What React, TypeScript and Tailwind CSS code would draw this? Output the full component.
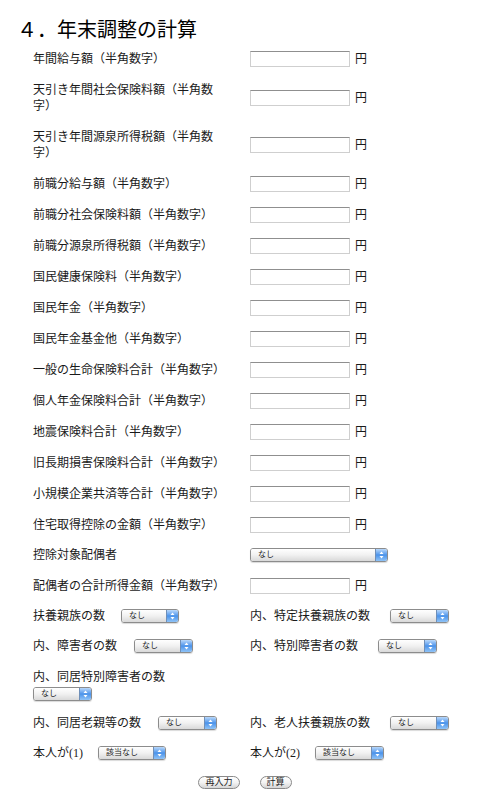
import type { ReactNode } from 'react'

const FONT = { fontFamily: '"Liberation Serif", "Noto Sans CJK JP", serif' }

const amountRows: ReactNode[] = [
  '年間給与額（半角数字）',
  <>天引き年間社会保険料額（半角数<br />字）</>,
  <>天引き年間源泉所得税額（半角数<br />字）</>,
  '前職分給与額（半角数字）',
  '前職分社会保険料額（半角数字）',
  '前職分源泉所得税額（半角数字）',
  '国民健康保険料（半角数字）',
  '国民年金（半角数字）',
  '国民年金基金他（半角数字）',
  '一般の生命保険料合計（半角数字）',
  '個人年金保険料合計（半角数字）',
  '地震保険料合計（半角数字）',
  '旧長期損害保険料合計（半角数字）',
  '小規模企業共済等合計（半角数字）',
  '住宅取得控除の金額（半角数字）',
]

function Arrows() {
  return (
    <svg width="5" height="8" viewBox="0 0 5 8">
      <path d="M2.5 0.5 L4.5 3 L0.5 3 Z" fill="#fff" />
      <path d="M2.5 7.5 L4.5 5 L0.5 5 Z" fill="#fff" />
    </svg>
  )
}

function Select({ className, text = 'なし' }: { className: string; text?: string }) {
  return (
    <span
      className={`inline-flex h-[14px] items-stretch overflow-hidden rounded-[3px] border border-[#8c8c8c] align-middle shadow-[0_1px_1px_rgba(0,0,0,0.15)] ${className}`}
    >
      <span className="flex flex-1 items-center bg-linear-to-b from-white via-[#f1f1f1] to-[#d9d9d9] pl-[7px] text-[8px] leading-none text-[#222]">
        {text}
      </span>
      <span className="flex w-[12px] items-center justify-center border-l border-[#6f8fb8] bg-linear-to-b from-[#b9d8fa] via-[#4b93ea] to-[#8fc3f7]">
        <Arrows />
      </span>
    </span>
  )
}

function Amount() {
  return (
    <div className="flex items-center">
      <span className="h-[16px] w-[100px] border border-[#cfcfcf] border-t-[#8f8f8f] bg-white" />
      <span className="ml-[5px]">円</span>
    </div>
  )
}

function Row({ label, children, tight }: { label: ReactNode; children?: ReactNode; tight?: boolean }) {
  const pad = tight ? 'py-[7px]' : 'py-[7.5px]'
  return (
    <>
      <div className={`${pad} pr-[17px]`}>{label}</div>
      <div className={`${pad} flex items-center`}>{children}</div>
    </>
  )
}

function Pair({ children }: { children: ReactNode }) {
  return <div className="flex h-[30px] items-center">{children}</div>
}

function Btn({ children }: { children: ReactNode }) {
  return (
    <span className="inline-flex h-[13px] items-center rounded-full border border-[#8a8a8a] bg-linear-to-b from-white via-[#f3f3f3] to-[#d6d6d6] px-[6px] text-[9px] leading-none text-[#222]">
      {children}
    </span>
  )
}

export default function App() {
  return (
    <div className="min-h-[809px] w-[480px] bg-white text-[#1a1a1a]" style={FONT}>
      <h1 className="pl-[17px] pt-[18px] text-[20px] leading-[24px] font-normal text-black">４．年末調整の計算</h1>

      <div className="mt-[1px] grid grid-cols-[217px_1fr] items-center pl-[33px] text-[12px] leading-[16px]">
        {amountRows.map((label, i) => (
          <Row key={i} label={label}>
            <Amount />
          </Row>
        ))}

        <Row label="控除対象配偶者" tight>
          <Select className="w-[138px]" />
        </Row>

        <Row label="配偶者の合計所得金額（半角数字）">
          <Amount />
        </Row>

        <Pair>
          扶養親族の数
          <Select className="ml-[16px] w-[58px]" />
        </Pair>
        <Pair>
          内、特定扶養親族の数
          <Select className="ml-[20px] w-[59px]" />
        </Pair>

        <Pair>
          内、障害者の数
          <Select className="ml-[17px] w-[59px]" />
        </Pair>
        <Pair>
          内、特別障害者の数
          <Select className="ml-[20px] w-[59px]" />
        </Pair>

        <div className="pb-[7px] pt-[7.5px]">
          <div>内、同居特別障害者の数</div>
          <Select className="w-[59px]" />
        </div>
        <div />

        <Pair>
          内、同居老親等の数
          <Select className="ml-[17px] w-[59px]" />
        </Pair>
        <Pair>
          内、老人扶養親族の数
          <Select className="ml-[20px] w-[59px]" />
        </Pair>

        <Pair>
          本人が(1)
          <Select className="ml-[15px] w-[68px]" text="該当なし" />
        </Pair>
        <Pair>
          本人が(2)
          <Select className="ml-[15px] w-[69px]" text="該当なし" />
        </Pair>
      </div>

      <div className="mt-[8px] flex justify-center gap-[20px] pl-[10px]">
        <Btn>再入力</Btn>
        <Btn>計算</Btn>
      </div>
    </div>
  )
}
